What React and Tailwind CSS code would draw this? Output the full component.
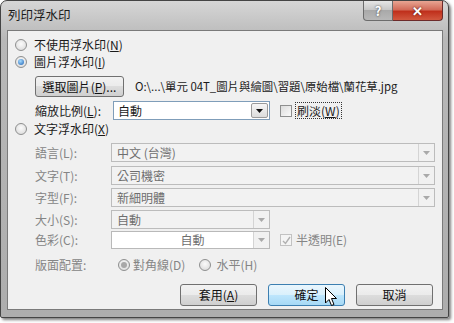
import React from "react";

const font = { fontFamily: '"Noto Sans CJK TC", "Noto Sans", sans-serif' };

const Radio = ({ checked, disabled }) => (
  <span className="flex items-center justify-center w-[12px] h-[12px] rounded-full border border-[#8e8f8f] bg-[radial-gradient(circle_at_50%_40%,#fbfbfb,#d6d6d6)] shrink-0">
    {checked && (
      <span
        className={
          disabled
            ? "w-[6px] h-[6px] rounded-full bg-[#a8a8a8]"
            : "w-[6px] h-[6px] rounded-full bg-[radial-gradient(circle_at_40%_35%,#a6dcff,#1c5fb3)]"
        }
      />
    )}
  </span>
);

const Check = ({ checked, disabled }) => (
  <span
    className={
      disabled
        ? "flex items-center justify-center w-[12px] h-[12px] border border-[#c2c2c2] bg-[#f4f4f4] shrink-0"
        : "flex items-center justify-center w-[12px] h-[12px] border border-[#8e8f8f] bg-[linear-gradient(135deg,#dcdcdc,#fafafa)] shrink-0"
    }
  >
    {checked && (
      <svg width="9" height="9" viewBox="0 0 9 9">
        <path d="M1 5 L3.5 7.5 L8 1" fill="none" stroke="#b0b0b0" strokeWidth="1.4" />
      </svg>
    )}
  </span>
);

const Arrow = ({ disabled }) => (
  <span
    className={
      disabled
        ? "flex items-center justify-center w-[16px] h-full border-l border-[#d4d4d4] bg-[#f1f1f1]"
        : "flex items-center justify-center w-[17px] h-full border border-[#9a9a9a] rounded-[2px] bg-[linear-gradient(#f6f6f6,#dcdcdc)]"
    }
  >
    <svg width="7" height="4" viewBox="0 0 7 4">
      <path d="M0 0 H7 L3.5 4 Z" fill={disabled ? "#a9a9a9" : "#111"} />
    </svg>
  </span>
);

const Field = ({ w, text, white, center }) => (
  <div
    className={
      white
        ? "flex items-stretch h-full border border-[#b9b9b9] bg-white"
        : "flex items-stretch h-full border border-[#bcbcbc] bg-[#f2f2f2]"
    }
    style={{ width: w }}
  >
    <span
      className={
        center
          ? "flex-1 flex items-center justify-center text-[12px] text-[#6e6e6e] pl-[20px]"
          : "flex-1 flex items-center pl-[5px] text-[12px] text-[#6e6e6e]"
      }
    >
      {text}
    </span>
    <Arrow disabled />
  </div>
);

const Key = ({ k }) => (
  <>
    (<span className="underline">{k}</span>)
  </>
);

const Btn = ({ children, hot, wide }) => (
  <div
    className={
      hot
        ? "flex items-center justify-center w-[77px] h-[22px] rounded-[3px] border border-[#3c7fb1] bg-[linear-gradient(#eaf6fd_0%,#d9f0fc_50%,#bee6fd_50%,#a7d9f5_100%)] text-[12px] text-[#111]"
        : wide
        ? "flex items-center justify-center w-[89px] h-[21px] rounded-[3px] border border-[#707070] bg-[linear-gradient(#f2f2f2_0%,#ebebeb_50%,#dddddd_50%,#cfcfcf_100%)] text-[12px] text-[#111]"
        : "flex items-center justify-center w-[77px] h-[22px] rounded-[3px] border border-[#707070] bg-[linear-gradient(#f2f2f2_0%,#ebebeb_50%,#dddddd_50%,#cfcfcf_100%)] text-[12px] text-[#111]"
    }
  >
    {children}
  </div>
);

export default function App() {
  return (
    <div className="w-[454px] h-[323px] bg-white overflow-hidden" style={font}>
      <div className="relative w-[449px] h-[318px] border border-[#444] rounded-t-[7px] rounded-b-[2px] bg-[linear-gradient(#d6d6d6,#b8b8b8_12%,#adadad)] shadow-[2px_2px_3px_rgba(0,0,0,0.5)]">
        <div className="flex items-start justify-between h-[29px]">
          <span className="pl-[7px] pt-[6px] text-[12.5px] text-[#1b1b1b] leading-[16px]">列印浮水印</span>
          <div className="flex mr-[5px]">
            <div className="flex items-center justify-center w-[30px] h-[20px] rounded-bl-[4px] border border-t-0 border-[#6c6c6c] bg-[linear-gradient(#e6e6e6,#c4c4c4_50%,#a9a9a9_50%,#b8b8b8)] text-[13px] font-bold text-white [text-shadow:0_0_2px_#333]">
              ?
            </div>
            <div className="flex items-center justify-center w-[50px] h-[20px] rounded-br-[4px] border border-t-0 border-l-0 border-[#6c2a2a] bg-[linear-gradient(#e8a593,#d36c5a_45%,#c0301c_55%,#d2583f)] text-[13px] font-bold text-white [text-shadow:0_0_2px_#4a0a0a]">
              ✕
            </div>
          </div>
        </div>

        <div className="ml-[6px] w-[436px] h-[280px] border border-[#7a7a7a] bg-[#f0f0f0] pt-[6px] text-[12px] text-[#1a1a1a]">
          <div className="flex items-center h-[16px] pl-[7px] gap-[7px]">
            <Radio />
            <span>不使用浮水印<Key k="N" /></span>
          </div>
          <div className="flex items-center h-[18px] pl-[7px] gap-[7px]">
            <Radio checked />
            <span>圖片浮水印<Key k="I" /></span>
          </div>

          <div className="flex items-center mt-[5px] h-[21px] pl-[27px]">
            <Btn wide>
              <span>選取圖片<Key k="P" />...</span>
            </Btn>
            <span className="ml-[11px] text-[11.4px] whitespace-nowrap">O:\...\單元 04T_圖片與繪圖\習題\原始檔\蘭花草.jpg</span>
          </div>

          <div className="flex items-center mt-[4px] h-[19px] pl-[27px]">
            <span className="w-[78px]">縮放比例<Key k="L" />:</span>
            <div className="flex items-stretch w-[157px] h-full border border-[#7f9db9] bg-white p-[1px]">
              <span className="flex-1 flex items-center pl-[3px]">自動</span>
              <Arrow />
            </div>
            <span className="ml-[10px]">
              <Check />
            </span>
            <span className="ml-[3px] px-[1px] border border-dotted border-[#333] leading-[15px]">
              刷淡<Key k="W" />
            </span>
          </div>

          <div className="flex items-center h-[18px] pl-[7px] gap-[7px]">
            <Radio />
            <span>文字浮水印<Key k="X" /></span>
          </div>

          <div className="flex items-center mt-[5px] h-[19px] pl-[27px] text-[#858585]">
            <span className="w-[76px]">語言(L):</span>
            <Field w={324} text="中文 (台灣)" />
          </div>
          <div className="flex items-center mt-[4px] h-[19px] pl-[27px] text-[#858585]">
            <span className="w-[76px]">文字(T):</span>
            <Field w={324} text="公司機密" />
          </div>
          <div className="flex items-center mt-[3px] h-[19px] pl-[27px] text-[#858585]">
            <span className="w-[76px]">字型(F):</span>
            <Field w={324} text="新細明體" />
          </div>
          <div className="flex items-center mt-[3px] h-[19px] pl-[27px] text-[#858585]">
            <span className="w-[76px]">大小(S):</span>
            <Field w={159} text="自動" />
          </div>
          <div className="flex items-center mt-[2px] h-[18px] pl-[27px] text-[#858585]">
            <span className="w-[76px]">色彩(C):</span>
            <Field w={159} text="自動" white center />
            <span className="ml-[10px]">
              <Check checked disabled />
            </span>
            <span className="ml-[4px]">半透明(E)</span>
          </div>

          <div className="flex items-center mt-[7px] h-[18px] pl-[27px] text-[#858585]">
            <span className="w-[83px]">版面配置:</span>
            <Radio checked disabled />
            <span className="ml-[3px]">對角線(D)</span>
            <span className="ml-[14px]">
              <Radio disabled />
            </span>
            <span className="ml-[5px]">水平(H)</span>
          </div>

          <div className="flex items-center mt-[10px] pl-[172px] gap-[11px]">
            <Btn>
              <span>套用<Key k="A" /></span>
            </Btn>
            <Btn hot>確定</Btn>
            <Btn>取消</Btn>
          </div>
        </div>

        <svg className="absolute left-[324px] top-[286px]" width="13" height="20" viewBox="0 0 13 20">
          <path d="M0.5 0.5 V16 L4 12.5 L6.5 18.5 L9 17.5 L6.5 11.5 H11.5 Z" fill="#fff" stroke="#000" strokeWidth="1" strokeLinejoin="round" />
        </svg>
      </div>
    </div>
  );
}
